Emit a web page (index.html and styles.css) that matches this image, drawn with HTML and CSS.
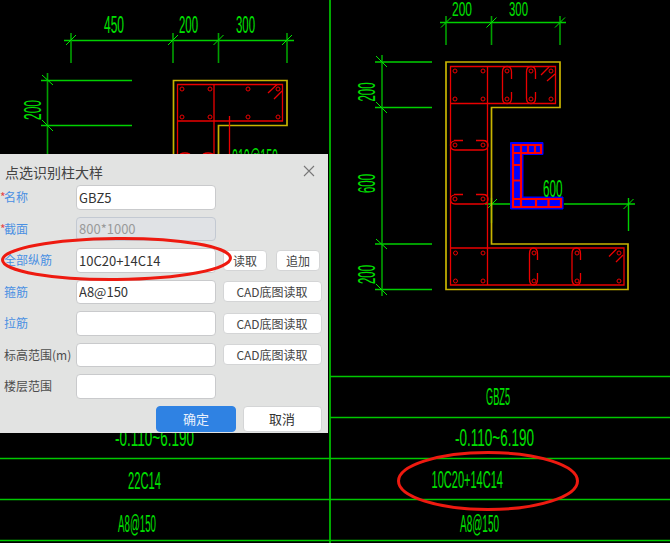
FILE: index.html
```html
<!DOCTYPE html>
<html lang="zh">
<head>
<meta charset="utf-8">
<title>点选识别柱大样</title>
<link rel="stylesheet" href="styles.css">
</head>
<body>
<main class="stage">
<svg class="cad" width="670" height="543" viewBox="0 0 670 543">
  <!-- table frame -->
  <path class="frame-v" d="M330 0V543"/>
  <path class="frame-h" d="M330 376.5H670M330 417.5H670M0 458.5H670M0 499.5H670M0 540.5H670"/>
  <!-- left drawing: dimensions -->
  <path class="dim-h" d="M64 40.5H294M41 80.5H132M41 125.5H132"/>
  <path class="dim-v" d="M71 33V63M173 33V63M218.5 33V63M287 33V63M47.5 73V155"/>
  <g class="tick">
    <path d="M66 45L76 35M168 45L178 35M213.5 45L223.5 35M282 45L292 35M42 75L53 85M42 120L53 131"/>
  </g>
  <g class="cad-text">
    <text x="104" y="33" textLength="20" lengthAdjust="spacingAndGlyphs">450</text>
    <text x="179" y="33" textLength="19" lengthAdjust="spacingAndGlyphs">200</text>
    <text x="236" y="33" textLength="19" lengthAdjust="spacingAndGlyphs">300</text>
    <text transform="translate(41 120) rotate(-90)" textLength="20" lengthAdjust="spacingAndGlyphs">200</text>
    <text x="232" y="166" textLength="46" lengthAdjust="spacingAndGlyphs">010@150</text>
  </g>
  <!-- left drawing: section -->
  <path class="outline" d="M173.5 154V80.5H287V125.5H218.5V154"/>
  <g class="rebar">
    <path d="M177.5 154V84.5H282.5V121H177.5M214 84.5V154M229.5 116V154"/>
    <path d="M268 93L277 84.5M274 99L282 91"/>
    <path d="M180 154Q185 152 190 154M203 154Q208 152 213 154"/>
    <circle cx="182" cy="89" r="2"/><circle cx="210" cy="89" r="2"/><circle cx="248" cy="89" r="2"/><circle cx="278" cy="89" r="2"/>
    <circle cx="182" cy="117" r="2"/><circle cx="210" cy="117" r="2"/><circle cx="248" cy="117" r="2"/><circle cx="278" cy="117" r="2"/>
  </g>
  <!-- right drawing: dimensions -->
  <path class="dim-h" d="M440 22.5H566M375 62H432M375 107.5H432M375 244H432M375 289.5H432M485 204H510M564 204H635"/>
  <path class="dim-v" d="M446 16V45M491.5 16V45M560 16V45M382 55V296"/>
  <path class="dim-h" d="M628.5 198V231M491.5 198V223"/>
  <g class="tick">
    <path d="M441 27.5L451 17.5M486.5 27.5L496.5 17.5M555 27.5L565 17.5M376 56L387 67M376 102L387 113M376 239L387 249M376 284L387 295M487 209L497 199M623.5 209L633.5 199"/>
  </g>
  <g class="cad-text">
    <text class="cad-top" x="452" y="15.5" textLength="20" lengthAdjust="spacingAndGlyphs">200</text>
    <text class="cad-top" x="509" y="15.5" textLength="19" lengthAdjust="spacingAndGlyphs">300</text>
    <text transform="translate(375 101.5) rotate(-90)" textLength="19" lengthAdjust="spacingAndGlyphs">200</text>
    <text transform="translate(375 193) rotate(-90)" textLength="19" lengthAdjust="spacingAndGlyphs">600</text>
    <text transform="translate(375 284) rotate(-90)" textLength="19" lengthAdjust="spacingAndGlyphs">200</text>
  </g>
  <!-- right drawing: section -->
  <path class="outline" d="M446 62H560V107.5H491.5V244H628V289.5H446Z"/>
  <g class="rebar">
    <path d="M450.5 66.5H555.5V103.5H450.5ZM487.5 66.5V285M450.5 103.5V285H624V248H450.5"/>
    <path d="M541 75L549 67M547 81L555 74M609 256.5L616.5 249M616 262L623 255"/>
    <path d="M511.5 92V98Q511.5 103.5 507 103.5Q502.5 103.5 502.5 98V72Q502.5 66.5 507 66.5Q511.5 66.5 511.5 72V79"/>
    <path d="M535.5 92V98Q535.5 103.5 531 103.5Q526.5 103.5 526.5 98V72Q526.5 66.5 531 66.5Q535.5 66.5 535.5 72V79"/>
    <path d="M537.5 273V279Q537.5 285 533.5 285Q529.5 285 529.5 279V254Q529.5 248 533.5 248Q537.5 248 537.5 254V260"/>
    <path d="M580.5 273V279Q580.5 285 576.5 285Q572 285 572 279V254Q572 248 576.5 248Q580.5 248 580.5 254V260"/>
    <path d="M454 140.5H463M476 140.5H483Q488 140.5 488 145Q488 150 483 150H455Q450.5 150 450.5 145Q450.5 142 454 141"/>
    <path d="M454 194.5H463M476 194.5H483Q488 194.5 488 199Q488 204 483 204H455Q450.5 204 450.5 199Q450.5 196 454 195"/>
    <circle cx="455" cy="71" r="2"/><circle cx="483" cy="71" r="2"/><circle cx="507" cy="71" r="2"/><circle cx="531" cy="71" r="2"/><circle cx="551" cy="71" r="2"/>
    <circle cx="455" cy="99" r="2"/><circle cx="483" cy="99" r="2"/><circle cx="507" cy="99" r="2"/><circle cx="531" cy="99" r="2"/><circle cx="551" cy="99" r="2"/>
    <circle cx="455" cy="145" r="2"/><circle cx="483" cy="145" r="2"/><circle cx="455" cy="199" r="2"/><circle cx="483" cy="199" r="2"/>
    <circle cx="455.5" cy="253" r="2"/><circle cx="483" cy="253" r="2"/><circle cx="534" cy="253" r="2"/><circle cx="577" cy="253" r="2"/><circle cx="619" cy="253" r="2"/>
    <circle cx="455.5" cy="281" r="2"/><circle cx="483" cy="281" r="2"/><circle cx="534" cy="281" r="2"/><circle cx="577" cy="281" r="2"/><circle cx="619" cy="281" r="2"/>
  </g>
  <!-- highlighted column -->
  <path class="hl-blue" d="M510.5 142.5H543V154.5H523V197H563V209H510.5Z"/>
  <path class="hl-red" d="M513 145H541V153H513ZM513 153V207H561V199H513M521 145V207M528 145V153M535 145V153M513 165H521M513 180.5H521M536 199V207M548.5 199V207"/>
  <text class="cad-text" x="543" y="197" textLength="19.5" lengthAdjust="spacingAndGlyphs">600</text>
  <!-- table text -->
  <g class="cad-text">
    <text x="486" y="404.5" textLength="24" lengthAdjust="spacingAndGlyphs">GBZ5</text>
    <text x="455" y="446" textLength="79" lengthAdjust="spacingAndGlyphs">-0.110~6.190</text>
    <text x="431.5" y="488" textLength="71.5" lengthAdjust="spacingAndGlyphs">10C20+14C14</text>
    <text x="460" y="532" textLength="39" lengthAdjust="spacingAndGlyphs">A8@150</text>
    <text x="115" y="446" textLength="79" lengthAdjust="spacingAndGlyphs">-0.110~6.190</text>
    <text x="128" y="489" textLength="33" lengthAdjust="spacingAndGlyphs">22C14</text>
    <text x="118" y="532" textLength="38" lengthAdjust="spacingAndGlyphs">A8@150</text>
  </g>
</svg>

<section class="dialog">
  <header class="dialog-head">
    <h1 class="dialog-title">点选识别柱大样</h1>
    <svg class="close" width="12" height="12" viewBox="0 0 12 12"><path d="M1 1L11 11M11 1L1 11"/></svg>
  </header>
  <div class="row">
    <label class="label link"><span class="star">*</span>名称</label>
    <input class="field" value="GBZ5">
  </div>
  <div class="row">
    <label class="label link"><span class="star">*</span>截面</label>
    <input class="field disabled" value="800*1000" disabled>
  </div>
  <div class="row">
    <label class="label link">全部纵筋</label>
    <input class="field" value="10C20+14C14">
    <button class="btn small">读取</button>
    <button class="btn small">追加</button>
  </div>
  <div class="row">
    <label class="label link">箍筋</label>
    <input class="field" value="A8@150">
    <button class="btn wide">CAD底图读取</button>
  </div>
  <div class="row">
    <label class="label link">拉筋</label>
    <input class="field" value="">
    <button class="btn wide">CAD底图读取</button>
  </div>
  <div class="row">
    <label class="label">标高范围(m)</label>
    <input class="field" value="">
    <button class="btn wide">CAD底图读取</button>
  </div>
  <div class="row">
    <label class="label">楼层范围</label>
    <input class="field" value="">
  </div>
  <footer class="dialog-foot">
    <button class="btn primary">确定</button>
    <button class="btn cancel">取消</button>
  </footer>
</section>

<svg class="marks" width="670" height="543" viewBox="0 0 670 543">
  <ellipse cx="116.5" cy="259" rx="114" ry="20.5" transform="rotate(-0.5 116.5 259)"/>
  <ellipse cx="488" cy="481" rx="89.5" ry="28.5"/>
</svg>
</main>
</body>
</html>
```
FILE: styles.css
```css
html, body { margin: 0; padding: 0; background: #000; }
.stage { position: relative; width: 670px; height: 543px; overflow: hidden; background: #000; }
.cad, .marks { position: absolute; left: 0; top: 0; display: block; }
.marks { pointer-events: none; }
.marks ellipse { fill: none; stroke: #ee1a10; stroke-width: 3; }

.frame-v { fill: none; stroke: #00a800; stroke-width: 2; }
.frame-h { fill: none; stroke: #00c800; stroke-width: 1.4; }
.dim-h { fill: none; stroke: #00d000; stroke-width: 1.4; }
.dim-v { fill: none; stroke: #00a000; stroke-width: 1.6; }
.tick path { fill: none; stroke: #00e800; stroke-width: 1; }
.cad-text { fill: #00e000; font-family: "Liberation Sans", sans-serif; font-size: 23px; }
.cad-top { font-size: 21px; }
.outline { fill: none; stroke: #c8b400; stroke-width: 1.7; }
.rebar path { fill: none; stroke: #ea0000; stroke-width: 1.3; }
.rebar circle { fill: none; stroke: #ea0000; stroke-width: 1; }
.hl-blue { fill: #0000ff; stroke: #0000ff; stroke-width: 1; }
.hl-red { fill: none; stroke: #ff0000; stroke-width: 2.2; }

.dialog {
  position: absolute; left: 0; top: 154px; box-sizing: border-box;
  width: 328px; height: 279px;
  background: #e2e3e2;
  font-family: "Noto Sans CJK SC", "Noto Sans", sans-serif;
  color: #444;
}
.dialog-head { display: flex; justify-content: space-between; align-items: center; height: 31px; padding: 0 13px 0 5px; box-sizing: border-box; }
.dialog-title { margin: 5px 0 0; font-size: 14px; line-height: 20px; font-weight: 400; color: #444; }
.close { margin-top: 2px; }
.close path { fill: none; stroke: #777; stroke-width: 1.1; }

.row { display: flex; align-items: center; height: 24.5px; margin-bottom: 7px; }
.label { display: block; box-sizing: border-box; flex: 0 0 76px; padding-left: 4px; font-size: 12px; line-height: 18px; white-space: nowrap; color: #4d4d4d; position: relative; }
.label.link { color: #4a90e2; }
.star { position: absolute; left: 0; top: 0; font-size: 12px; width: 4px; overflow: visible; color: #e4484a; }
.field {
  flex: 0 0 140px; box-sizing: border-box; width: 140px; height: 24.5px; margin: 0; padding: 0 2px;
  background: #fff; border: 1px solid #c9cacc; border-radius: 4px;
  font: 13px "Noto Sans CJK SC", "Noto Sans", sans-serif; color: #333; outline: none;
}
.field.disabled { background: #e0e2e5; color: #9a9a9a; border-color: #c3c9d2; }
.btn {
  box-sizing: border-box; margin: 0; padding: 0; height: 21px;
  background: #fff; border: 1px solid #d4d5d6; border-radius: 4px;
  font: 12px "Noto Sans CJK SC", "Noto Sans", sans-serif; color: #444;
}
.small { width: 44px; margin-left: 7px; }
.small + .small { margin-left: 9px; }
.wide { width: 99px; margin-left: 6.5px; }
.dialog-foot { display: flex; justify-content: flex-end; gap: 6.5px; padding: 0 6.5px 0 0; margin-top: 6px; }
.primary { width: 80px; height: 26px; background: #2f82e3; border-color: #2f82e3; color: #e8f0fb; font-size: 13px; }
.cancel { width: 79px; height: 26px; font-size: 13px; color: #333; }
```
